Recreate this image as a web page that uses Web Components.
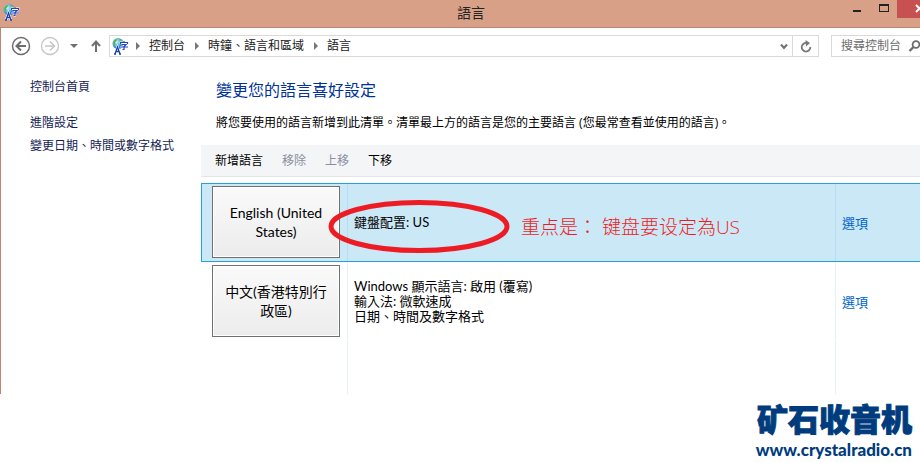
<!DOCTYPE html>
<html lang="zh-Hant">
<head>
<meta charset="utf-8">
<title>語言</title>
<style>
  html, body { height: 100%; }
  body {
    margin: 0;
    display: flex;
    flex-direction: column;
    min-height: 100vh;
    overflow-x: hidden;
    background: #fff;
    color: #000;
    font: 12px/18px "Open Sans", "Noto Sans CJK TC", sans-serif;
  }
</style>
</head>
<body>
<settings-window>
  <title-bar slot="title">語言</title-bar>
  <nav-bar slot="nav"></nav-bar>
  <side-nav slot="side"></side-nav>
  <language-panel></language-panel>
</settings-window>
<site-mark></site-mark>

<script>
{
const define = (name, html) => {
  customElements.define(name, class extends HTMLElement {
    constructor() {
      super();
      this.attachShadow({mode: 'open'}).innerHTML = html;
    }
  });
};

define('language-icon', `
<style>
  :host { display: block; width: 17px; height: 17px; }
  svg { display: block; }
</style>
<svg width="17" height="17" viewBox="0 0 17 17" aria-hidden="true">
  <defs>
    <radialGradient id="g" cx="35%" cy="35%" r="70%">
      <stop offset="0" stop-color="#d8f4ff"/>
      <stop offset=".5" stop-color="#58b5e2"/>
      <stop offset="1" stop-color="#1763ae"/>
    </radialGradient>
  </defs>
  <circle cx="6" cy="5.500" r="5.500" fill="url(#g)"/>
  <path d="M1 4 3 1.500 5 1 4.500 3 3 4.500 3.500 6.500 2 8Z" fill="#50b54a"/>
  <path d="M7 1 10 2 10.500 4 8 4Z" fill="#79bd58"/>
  <path d="M3 16 5.500 9 8 16M4 13.500H7" fill="none" stroke="#fff" stroke-width="2.400"/>
  <path d="M3 16 5.500 9 8 16M4 13.500H7M2 16H4M7 16H9" fill="none" stroke="#1a3fae" stroke-width="1.300"/>
  <path d="M8.500 6V4.500H15.500V6M12 3V4.500M9.500 6.500H14L12 8.500V11.500H10.500M8.500 9H16" fill="none" stroke="#fff" stroke-width="2"/>
  <path d="M8.500 6V4.500H15.500V6M12 3V4.500M9.500 6.500H14L12 8.500V11.500H10.500M8.500 9H16" fill="none" stroke="#2347c0" stroke-width="1.200"/>
</svg>
`);

define('settings-window', `
<style>
  :host {
    flex: 1 0 auto;
    display: flex;
    flex-direction: column;
    border-left: 1px solid #bd8570;
  }
  .body { flex: 1; display: flex; }
  main { flex: 1; min-width: 0; display: flex; }
</style>
<slot name="title"></slot>
<slot name="nav"></slot>
<div class="body">
  <slot name="side"></slot>
  <main><slot></slot></main>
</div>
`);

define('title-bar', `
<style>
  :host {
    display: grid;
    grid-template-columns: 76px 1fr 76px;
    height: 27px;
    margin-left: -1px;
    background: #d8a187;
    border-bottom: 1px solid #bb8672;
  }
  language-icon { margin: 4px 0 0 3px; }
  h1 {
    margin: 0;
    padding-left: 22px;
    text-align: center;
    font-size: 14px;
    line-height: 25px;
    font-weight: 400;
    color: #222;
  }
  .buttons { display: flex; justify-content: flex-end; align-items: flex-start; }
  button {
    width: 26px;
    height: 18px;
    padding: 0;
    border: 0;
    background: none;
    overflow: hidden;
  }
  button.close { width: 23px; background: #c75050; }
  svg { display: block; }
</style>
<language-icon></language-icon>
<h1><slot></slot></h1>
<div class="buttons">
  <button aria-label="最小化"><svg width="26" height="18"><path d="M8 10h8v2H8z" fill="#222"/></svg></button>
  <button aria-label="最大化"><svg width="26" height="18"><path d="M8 4h10v8H8zM9 6v5h8V6z" fill="#222" fill-rule="evenodd"/></svg></button>
  <button class="close" aria-label="關閉"><svg width="23" height="18"><path d="M19 5 26 12M19 12 26 5" stroke="#fff" stroke-width="2"/></svg></button>
</div>
`);

define('nav-bar', `
<style>
  :host {
    display: flex;
    align-items: center;
    height: 22px;
    padding: 7px 0 7px 10px;
  }
  button { padding: 0; border: 0; background: none; display: block; }
  svg { display: block; }
  .forward { margin-left: 9px; }
  .recent { margin-left: 10px; }
  .up { margin: 0 8px 0 13px; }
  .address {
    flex: 1;
    display: flex;
    align-items: center;
    height: 20px;
    border: 1px solid #d9d9d9;
  }
  language-icon { margin-left: 2px; }
  ol { flex: 1; display: flex; margin: 0; padding: 0; list-style: none; }
  li { display: flex; align-items: center; line-height: 20px; }
  li svg { margin: 0 9px 0 10px; }
  li:first-child svg { margin-left: 7px; }
  a { color: #1a1a1a; text-decoration: none; }
  .history { padding: 0 4px; }
  .refresh { padding: 0 6px 0 7px; border-left: 1px solid #d9d9d9; height: 20px; }
  .search {
    display: flex;
    align-items: center;
    width: 88px;
    height: 20px;
    margin-left: 12px;
    border: 1px solid #d9d9d9;
    border-right: 0;
    overflow: hidden;
  }
  input {
    flex: none;
    width: 76px;
    box-sizing: border-box;
    padding: 0 0 0 9px;
    border: 0;
    outline: 0;
    background: none;
    font: inherit;
  }
  input::placeholder { color: #6d6d6d; opacity: 1; }
  .search svg { flex: none; }
</style>
<button aria-label="上一頁"><svg width="20" height="20" fill="none" stroke="#6c6c6c"><circle cx="10" cy="10" r="8.500" stroke-width="1.500"/><path d="M15 10H6M10 5.500 5.500 10 10 14.500" stroke-width="2"/></svg></button>
<button class="forward" aria-label="下一頁"><svg width="20" height="20" fill="none" stroke="#c6c6c6"><circle cx="10" cy="10" r="8.500" stroke-width="1.300"/><path d="M5 10H14M10 5.500 14.500 10 10 14.500" stroke-width="1.500"/></svg></button>
<button class="recent" aria-label="最近的位置"><svg width="8" height="4"><path d="M0 0H8L4 4Z" fill="#707070"/></svg></button>
<button class="up" aria-label="上移一層"><svg width="10" height="12" fill="none" stroke="#707070" stroke-width="2"><path d="M5 12V2M1 6 5 1.500 9 6"/></svg></button>
<div class="address">
  <language-icon></language-icon>
  <ol>
    <li><svg width="4" height="8"><path d="M0 0 4 4 0 8Z" fill="#777"/></svg><a href="#">控制台</a></li>
    <li><svg width="4" height="8"><path d="M0 0 4 4 0 8Z" fill="#777"/></svg><a href="#">時鐘、語言和區域</a></li>
    <li><svg width="4" height="8"><path d="M0 0 4 4 0 8Z" fill="#777"/></svg><a href="#">語言</a></li>
  </ol>
  <button class="history" aria-label="先前的位置"><svg width="8" height="7" fill="none" stroke="#707070" stroke-width="2"><path d="M1 1.500 4 5 7 1.500"/></svg></button>
  <button class="refresh" aria-label="重新整理"><svg width="12" height="13" fill="none" stroke="#777" stroke-width="1.800"><path d="M6.500 3A4.300 4.300 0 1 0 10.300 7"/><path d="M5.500 0 10 3 6 6.500Z" fill="#777" stroke="none"/></svg></button>
</div>
<div class="search">
  <input type="text" aria-label="搜尋控制台" placeholder="搜尋控制台">
  <svg width="13" height="12" fill="none" stroke="#6c6c6c"><circle cx="8" cy="4.500" r="3.400" stroke-width="1.800"/><path d="M5.500 7 1.500 11" stroke-width="2.400"/></svg>
</div>
`);

define('side-nav', `
<style>
  :host { display: block; width: 200px; flex: none; }
  nav { display: flex; flex-direction: column; align-items: flex-start; gap: 5px; padding: 14px 0 0 29px; }
  a { color: #151c55; text-decoration: none; }
  .home { margin-bottom: 13px; }
</style>
<nav>
  <a class="home" href="#">控制台首頁</a>
  <a href="#">進階設定</a>
  <a href="#">變更日期、時間或數字格式</a>
</nav>
`);

define('language-row', `
<style>
  :host { display: block; border: 1px solid transparent; border-right: 0; font-family: Lato, "Noto Sans CJK TC", sans-serif; }
  :host([selected]) { background: #cbe8f6; border-color: #26a0da; }
  .row { display: grid; grid-template-columns: 145px 1fr 85px; min-height: 77px; }
  .row > div { display: flex; align-items: center; }
  .row > div + div { border-left: 1px solid #e6f0fb; }
  :host([selected]) .row > div + div { border-color: #b8dcf4; }
  .row > .tile { align-items: flex-start; padding: 2px 0 0 10px; }
  button {
    width: 128px;
    height: 72px;
    padding: 0 8px;
    border: 1px solid #707070;
    box-shadow: inset 0 0 0 1px #fff;
    background: linear-gradient(#fafafa, #ececec);
    color: #000;
    font: inherit;
    font-size: 14px;
    line-height: 19px;
  }
  .detail { position: relative; padding-left: 6px; font-size: 13px; line-height: 15px; }
  a { padding-left: 6px; color: #0066cc; font-size: 13px; text-decoration: none; }
</style>
<div class="row">
  <div class="tile"><button><slot name="name"></slot></button></div>
  <div class="detail"><span><slot></slot></span><slot name="callout"></slot></div>
  <div><a href="#">選項</a></div>
</div>
`);

// hand-drawn mark laid over the row that it points at
define('red-callout', `
<style>
  :host {
    position: absolute;
    left: -20px;
    top: 16px;
    display: flex;
    align-items: center;
    gap: 11px;
    white-space: nowrap;
    color: #ed1c24;
    font: 300 19px/28px "Open Sans", "Noto Sans CJK TC", sans-serif;
  }
  svg { display: block; }
</style>
<svg width="182" height="53" aria-hidden="true"><ellipse cx="91" cy="26.500" rx="88" ry="24" fill="none" stroke="#ed1c24" stroke-width="5"/></svg>
<slot></slot>
`);

define('language-panel', `
<style>
  :host { flex: 1; min-width: 0; display: flex; flex-direction: column; }
  h2 { margin: 14px 0 0 15px; font-size: 16px; line-height: 24px; font-weight: 400; color: #003399; }
  p { margin: 12px 0 13px 15px; }
  .toolbar {
    display: flex;
    gap: 19px;
    height: 31px;
    padding-left: 14px;
    background: #f4f5f7;
    border-bottom: 1px solid #e5e5e5;
    margin-bottom: 6px;
  }
  .toolbar button { padding: 0; border: 0; background: none; color: #000; font: inherit; }
  .toolbar button:disabled { color: #8a8f9f; }
  .rest { flex: 1; display: grid; grid-template-columns: 146px 1fr 85px; }
  .rest i + i { border-left: 1px solid #e6f0fb; }
</style>
<h2>變更您的語言喜好設定</h2>
<p>將您要使用的語言新增到此清單。清單最上方的語言是您的主要語言 (您最常查看並使用的語言)。</p>
<div class="toolbar">
  <button>新增語言</button>
  <button disabled>移除</button>
  <button disabled>上移</button>
  <button>下移</button>
</div>
<language-row selected>
  <span slot="name">English (United States)</span>
  鍵盤配置: US
  <red-callout slot="callout">重点是： 键盘要设定為US</red-callout>
</language-row>
<language-row>
  <span slot="name">中文(香港特別行政區)</span>
  Windows 顯示語言: 啟用 (覆寫)<br>輸入法: 微軟速成<br>日期、時間及數字格式
</language-row>
<div class="rest"><i></i><i></i><i></i></div>
`);

define('site-mark', `
<style>
  :host {
    flex: none;
    display: flex;
    flex-direction: column;
    align-items: flex-end;
    padding: 6px 8px 1px 0;
    color: #003c7d;
  }
  strong {
    font: 900 31px/36px "Noto Sans CJK SC", sans-serif;
    -webkit-text-stroke: 1px #003c7d;
  }
  a {
    margin-top: 2px;
    color: inherit;
    text-decoration: none;
    font: 900 17px/24px Lato, sans-serif;
  }
</style>
<strong>矿石收音机</strong>
<a href="#">www.crystalradio.cn</a>
`);
}
</script>
</body>
</html>
